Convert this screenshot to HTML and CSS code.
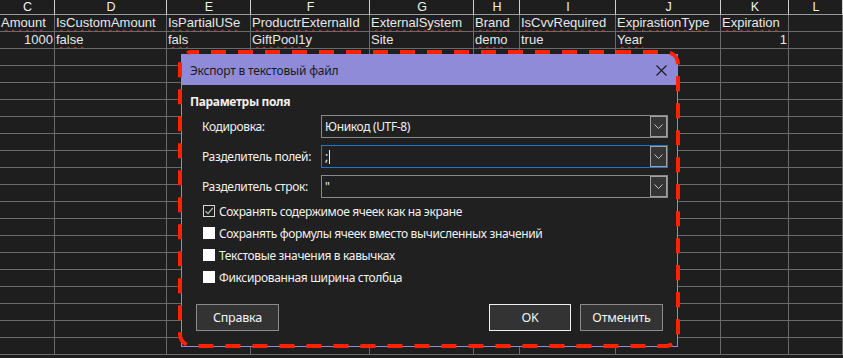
FILE: index.html
```html
<!DOCTYPE html>
<html lang="ru">
<head>
  <meta charset="UTF-8" />
  <meta name="viewport" content="width=device-width, initial-scale=1.0"/>
  <title>Экспорт в текстовый файл</title>
  <link rel="stylesheet" href="styles.css">
</head>
<body>
  <table class="sheet">
    <thead>
      <tr>
        <th class="col-c">C</th>
        <th class="col-d">D</th>
        <th class="col-e">E</th>
        <th class="col-f">F</th>
        <th class="col-g">G</th>
        <th class="col-h">H</th>
        <th class="col-i">I</th>
        <th class="col-j">J</th>
        <th class="col-k">K</th>
        <th class="col-l">L</th>
      </tr>
    </thead>
    <tbody id="sheet-body">
      <tr>
        <td><span class="sp">Amount</span></td>
        <td><span class="sp">IsCustomAmount</span></td>
        <td><span class="sp">IsPartialUSe</span></td>
        <td><span class="sp">ProductrExternalId</span></td>
        <td><span class="sp">ExternalSystem</span></td>
        <td><span class="sp">Brand</span></td>
        <td><span class="sp">IsCvvRequired</span></td>
        <td><span class="sp">ExpirastionType</span></td>
        <td><span class="sp">Expiration</span></td>
        <td></td>
      </tr>
      <tr>
        <td class="num">1000</td>
        <td><span class="sp">false</span></td>
        <td><span class="sp">fals</span></td>
        <td><span class="sp">GiftPool1y</span></td>
        <td>Site</td>
        <td><span class="sp">demo</span></td>
        <td>true</td>
        <td><span class="sp">Year</span></td>
        <td class="num">1</td>
        <td></td>
      </tr>
    </tbody>
  </table>

  <div class="dialog">
    <div class="dialog-title">
      <span>Экспорт в текстовый файл</span>
      <svg class="close-icon" width="11" height="11" viewBox="0 0 11 11">
        <path d="M0.5 0.5 L10.5 10.5 M10.5 0.5 L0.5 10.5" stroke="#1a1a1a" stroke-width="1.1" fill="none"/>
      </svg>
    </div>
    <div class="dialog-body">
      <div class="group-title">Параметры поля</div>

      <div class="fields">
        <div class="field-row">
          <label>Кодировка:</label>
          <div class="combo">
            <span class="combo-value">Юникод (UTF-8)</span>
            <span class="combo-arrow"><svg width="9" height="5" viewBox="0 0 9 5"><path d="M0.5 0.5 L4.5 4.5 L8.5 0.5" stroke="#c4c4c4" fill="none"/></svg></span>
          </div>
        </div>
        <div class="field-row">
          <label>Разделитель полей:</label>
          <div class="combo focused">
            <span class="combo-value">;<span class="caret"></span></span>
            <span class="combo-arrow"><svg width="9" height="5" viewBox="0 0 9 5"><path d="M0.5 0.5 L4.5 4.5 L8.5 0.5" stroke="#c4c4c4" fill="none"/></svg></span>
          </div>
        </div>
        <div class="field-row">
          <label>Разделитель строк:</label>
          <div class="combo">
            <span class="combo-value">"</span>
            <span class="combo-arrow"><svg width="9" height="5" viewBox="0 0 9 5"><path d="M0.5 0.5 L4.5 4.5 L8.5 0.5" stroke="#c4c4c4" fill="none"/></svg></span>
          </div>
        </div>
      </div>

      <ul class="options">
        <li>
          <span class="check checked"><svg width="10" height="10" viewBox="0 0 10 10"><path d="M1.5 5.2 L4 7.6 L8.8 2" stroke="#b8b8b8" stroke-width="1.2" fill="none"/></svg></span>
          Сохранять содержимое ячеек как на экране
        </li>
        <li><span class="check"></span>Сохранять формулы ячеек вместо вычисленных значений</li>
        <li><span class="check"></span>Текстовые значения в кавычках</li>
        <li><span class="check"></span>Фиксированная ширина столбца</li>
      </ul>

      <div class="buttons">
        <button class="btn">Справка</button>
        <span class="spacer"></span>
        <button class="btn btn-ok">OK</button>
        <button class="btn">Отменить</button>
      </div>
    </div>
  </div>

  <svg class="annotation" width="502" height="298" viewBox="0 0 502 298">
    <rect x="2" y="2" width="498" height="294" rx="12" fill="none" stroke="#ff2200" stroke-width="4" stroke-dasharray="15 12" stroke-dashoffset="8"/>
  </svg>

  <script>
    const sheetBody = document.getElementById('sheet-body');
    for (let i = 0; i < 18; i++) {
      const row = document.createElement('tr');
      row.innerHTML = '<td></td>'.repeat(10);
      sheetBody.appendChild(row);
    }
  </script>
</body>
</html>
```

FILE: styles.css
```css
body {
  margin: 0;
  background: #1e1e1e;
  font-family: "Liberation Sans", Arial, sans-serif;
  overflow: hidden;
  height: 358px;
}

.sheet {
  table-layout: fixed;
  border-collapse: separate;
  border-spacing: 0;
  width: 843px;
  color: #e8e8e8;
  font-size: 13px;
}

.sheet th, .sheet td {
  box-sizing: border-box;
  padding: 0 0 0 1px;
  white-space: nowrap;
  overflow: hidden;
}

.sheet th {
  height: 15px;
  line-height: 14px;
  font-weight: normal;
  font-size: 12.5px;
  color: #f2f2f2;
  text-align: center;
  border-right: 1px solid #d0d0d0;
  border-bottom: 1px solid #9a9a9a;
}

.sheet td {
  height: 17px;
  line-height: 16px;
  text-align: left;
  border-right: 1px solid #6a6a6a;
  border-bottom: 1px solid #6a6a6a;
}

.sheet td.num {
  text-align: right;
  padding: 0 1px 0 0;
}

.col-c { width: 55px; }
.col-d { width: 112px; }
.col-e { width: 84px; }
.col-f { width: 119px; }
.col-g { width: 104px; }
.col-h { width: 46px; }
.col-i { width: 96px; }
.col-j { width: 105px; }
.col-k { width: 68px; }
.col-l { width: 54px; }

.sp {
  text-decoration: underline wavy #d42a2a;
  text-decoration-thickness: 1px;
  text-underline-offset: 2px;
}

/* dialog */
.dialog {
  position: absolute;
  left: 181px;
  top: 54px;
  width: 497px;
  height: 293px;
  box-sizing: border-box;
  border: 1px solid #8f8bd8;
  background: #202020;
  font-family: "Noto Sans", "Open Sans", sans-serif;
  font-size: 12px;
  letter-spacing: -0.35px;
  color: #f0f0f0;
}

.dialog-title {
  height: 30px;
  background: #8f8bd8;
  color: #1a1a1a;
  letter-spacing: -0.2px;
  display: flex;
  align-items: center;
  justify-content: space-between;
  padding: 0 10px 0 8px;
}

.close-icon {
  display: block;
}

.dialog-body {
  display: flex;
  flex-direction: column;
  padding: 9px 0 15px 0;
}

.group-title {
  font-weight: bold;
  line-height: 16px;
  padding-left: 8px;
  margin-bottom: 5px;
}

.fields {
  display: flex;
  flex-direction: column;
  gap: 7px;
}

.field-row {
  display: flex;
  align-items: center;
  padding-left: 20px;
}

.field-row label {
  width: 119px;
}

.combo {
  width: 347px;
  height: 23px;
  box-sizing: border-box;
  border: 1px solid #8a8a8a;
  display: flex;
  align-items: stretch;
}

.combo.focused {
  border-color: #1b78d0;
}

.combo-value {
  flex: 1;
  display: flex;
  align-items: center;
  padding-left: 3px;
}

.caret {
  display: inline-block;
  width: 1px;
  height: 14px;
  background: #f0f0f0;
  margin-left: 1px;
}

.combo-arrow {
  width: 17px;
  box-sizing: border-box;
  border: 1px solid #a0a0a0;
  background: #353535;
  display: flex;
  align-items: center;
  justify-content: center;
}

.options {
  list-style: none;
  margin: 2px 0 0 0;
  padding: 0 0 0 21px;
}

.options li {
  height: 22px;
  display: flex;
  align-items: center;
  gap: 4px;
}

.check {
  width: 12px;
  height: 12px;
  box-sizing: border-box;
  background: #ffffff;
  display: flex;
  align-items: center;
  justify-content: center;
}

.check.checked {
  background: #1e1e1e;
  border: 1px solid #d8d8d8;
}

.buttons {
  display: flex;
  gap: 9px;
  padding: 0 14px;
  margin-top: 16px;
}

.spacer {
  flex: 1;
}

.btn {
  width: 83px;
  height: 27px;
  background: #333333;
  border: 1px solid #8b8b8b;
  color: #f4f4f4;
  font-family: "Noto Sans", "Open Sans", sans-serif;
  font-size: 12.5px;
  letter-spacing: -0.2px;
  padding: 0;
}

.btn-ok {
  width: 82px;
  border-color: #f0f0f0;
}

.annotation {
  position: absolute;
  left: 178px;
  top: 50px;
}
```
